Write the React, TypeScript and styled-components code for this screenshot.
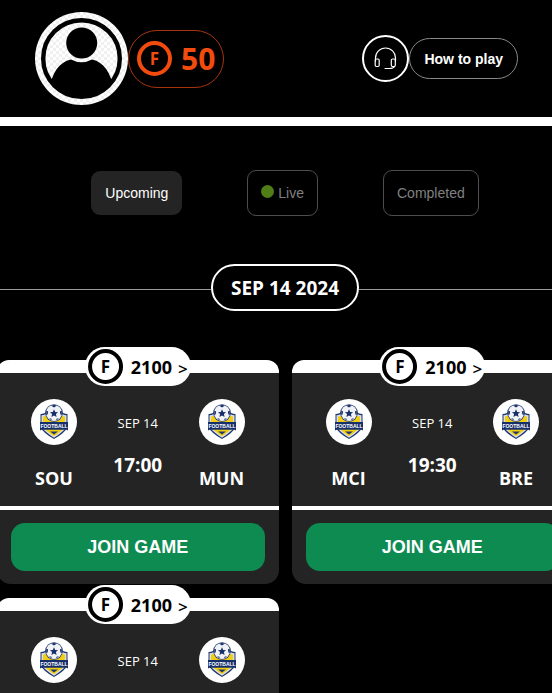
import React, { useState } from "react";
import styled, { createGlobalStyle } from "styled-components";

const GlobalStyle = createGlobalStyle`
  *, *::before, *::after { box-sizing: border-box; }
  body {
    margin: 0;
    background: #000;
    color: #fff;
    font-family: "Open Sans", "Noto Sans", sans-serif;
    overflow-x: hidden;
  }
  button { font-family: "Liberation Sans", Arial, sans-serif; cursor: pointer; }
`;

const Page = styled.div`
  overflow: hidden;
`;

const Header = styled.header`
  display: flex;
  align-items: center;
  justify-content: space-between;
  padding: 12px 34px 12px 35px;
  border-bottom: 9px solid #fff;
`;

const Group = styled.div`
  display: flex;
  align-items: center;
`;

const AvatarButton = styled.button`
  display: block;
  width: 93px;
  height: 93px;
  padding: 0;
  border: 0;
  border-radius: 50%;
  background: none;
  svg { display: block; }
`;

const Balance = styled.div`
  display: flex;
  align-items: center;
  gap: 9px;
  height: 58px;
  padding: 0 8px;
  border: 1px solid #a5350f;
  border-radius: 29px;
  color: #f24b0f;
  font-size: 30px;
  font-weight: 700;
`;

const Coin = styled.span`
  display: flex;
  align-items: center;
  justify-content: center;
  width: 35px;
  height: 35px;
  border: 4px solid currentColor;
  border-radius: 50%;
  font-size: 17px;
  font-weight: 700;
  line-height: 20px;
`;

const SupportButton = styled.button`
  display: flex;
  align-items: center;
  justify-content: center;
  width: 47px;
  height: 47px;
  padding: 0;
  border: 2px solid #fff;
  border-radius: 50%;
  background: #000;
  color: #fff;
`;

const HelpButton = styled.button`
  height: 41px;
  padding: 0 14px;
  border: 1px solid #8a8a8a;
  border-radius: 21px;
  background: #000;
  color: #fff;
  font-size: 14px;
  font-weight: 700;
`;

const Main = styled.main`
  margin-right: -18px;
`;

const Tabs = styled.nav`
  display: flex;
  align-items: center;
  justify-content: center;
  gap: 65px;
  padding-top: 44px;
`;

const Tab = styled.button<{ $active: boolean }>`
  display: flex;
  align-items: center;
  gap: 4px;
  height: ${(p) => (p.$active ? 44 : 46)}px;
  padding: 0 ${(p) => (p.$active ? 14 : 13)}px;
  border: ${(p) => (p.$active ? "0" : "1px solid #4d4d4d")};
  border-radius: 9px;
  background: ${(p) => (p.$active ? "#242424" : "#000")};
  color: ${(p) => (p.$active ? "#fff" : "#808080")};
  font-size: 14px;
`;

const LiveDot = styled.span`
  width: 13px;
  height: 13px;
  margin-bottom: 4px;
  border-radius: 50%;
  background: #4f7d16;
`;

const DateRow = styled.div`
  display: flex;
  align-items: center;
  padding-top: 48px;
  &::before, &::after {
    content: "";
    flex: 1;
    height: 1px;
    margin-top: 4px;
    background: #999;
  }
`;

const DatePill = styled.h2`
  margin: 0;
  padding: 2px 18px 0;
  border: 2px solid #fff;
  border-radius: 24px;
  font-size: 19px;
  font-weight: 700;
  line-height: 41px;
`;

const Matches = styled.section`
  display: grid;
  grid-template-columns: 1fr 1fr;
  gap: 14px 13px;
  margin: 49px -3px 0;
`;

const Card = styled.article`
  position: relative;
  border-top: 13px solid #fff;
  border-radius: 12px 12px 14px 14px;
  background: #242424;
`;

const PrizeButton = styled.button`
  position: absolute;
  top: -26px;
  left: 50%;
  transform: translateX(-50%);
  display: flex;
  align-items: center;
  height: 39px;
  padding: 0 3px;
  border: 0;
  border-radius: 20px;
  background: #fff;
  color: #000;
  && { font-family: "Open Sans", "Noto Sans", sans-serif; }
`;

const Prize = styled.span`
  margin: 0 6px 0 8px;
  font-size: 18px;
  font-weight: 700;
`;

const Arrow = styled.span`
  padding-top: 4px;
  font-size: 17px;
  font-weight: 600;
`;

const Fixture = styled.div`
  display: flex;
  justify-content: space-between;
  height: 133px;
  padding: 26px 27px 0;
`;

const Team = styled.div`
  display: flex;
  flex-direction: column;
  align-items: center;
  gap: 21px;
  width: 60px;
  font-size: 18px;
  font-weight: 700;
  line-height: 24px;
`;

const Badge = styled.svg`
  display: block;
  width: 46px;
  height: 46px;
`;

const Kickoff = styled.div`
  display: flex;
  flex-direction: column;
  align-items: center;
  gap: 20px;
  padding-top: 14px;
`;

const Day = styled.span`
  font-size: 13px;
  line-height: 20px;
`;

const Time = styled.time`
  font-size: 19px;
  font-weight: 700;
  line-height: 24px;
`;

const Footer = styled.div`
  padding: 13px 14px;
  border-top: 4px solid #fff;
`;

const JoinButton = styled.button`
  display: block;
  width: 100%;
  height: 48px;
  border: 0;
  border-radius: 14px;
  background: #0d8b51;
  color: #fff;
  font-size: 18px;
  font-weight: 700;
`;

function AvatarIcon() {
  return (
    <svg width="93" height="93" viewBox="0 0 93 93" aria-hidden="true">
      <defs>
        <pattern id="checks" width="6" height="6" patternUnits="userSpaceOnUse">
          <rect width="6" height="6" fill="#fff" />
          <path d="M0 0h3v3H0zM3 3h3v3H3z" fill="#f0f0f0" />
        </pattern>
        <clipPath id="face"><circle cx="46.5" cy="46.5" r="38" /></clipPath>
      </defs>
      <circle cx="46.5" cy="46.5" r="46.5" fill="url(#checks)" />
      <circle cx="46.5" cy="46.5" r="38.3" fill="none" stroke="#000" strokeWidth="4.4" />
      <g clipPath="url(#face)">
        <path d="M14 78C17 61 24 50 36 47.5Q46.5 53 57 47.5C69 50 76 61 79 78L79 93H14Z" fill="#000" />
      </g>
      <circle cx="46.7" cy="31" r="15.5" fill="#000" />
    </svg>
  );
}

function HeadsetIcon() {
  return (
    <svg width="23" height="23" viewBox="0 0 23 23" fill="none" stroke="currentColor" strokeWidth="1.2" strokeLinecap="round" aria-hidden="true">
      <path d="M1.5 14V11a10 10 0 0 1 20 0v3" />
      <rect x="1.2" y="12" width="4" height="7.5" rx="1.2" />
      <rect x="17.3" y="12" width="4" height="7.5" rx="1.2" />
      <path d="M20.5 19.5Q19.5 21.5 15 21.5H11" />
    </svg>
  );
}

function TeamBadge() {
  return (
    <Badge viewBox="0 0 46 46" aria-hidden="true">
      <circle cx="23" cy="23" r="23" fill="#fff" />
      <path d="M9.5 15Q14 15 16 12H30Q32 15 36.5 15V28Q34 34 23 40Q12 34 9.5 28Z" fill="#21386f" />
      <path d="M10.5 16.2Q15 16 17 13H29Q31 16 35.5 16.2V28Q32 33 23 38.8Q14 33 10.5 28Z" fill="#d9e0ec" />
      <path d="M12 17.5Q16 17 18 15H28Q30 17 34 17.5V28Q31 32 23 37.2Q15 32 12 28Z" fill="#f2ce13" />
      <circle cx="23" cy="14" r="8.8" fill="#21386f" />
      <circle cx="23" cy="14" r="8" fill="#f1f2f6" />
      <path d="M23 10.2l1.2 2.7 2.9.3-2.2 1.9.7 2.9-2.6-1.5-2.6 1.5.7-2.9-2.2-1.9 2.9-.3z" fill="#17306b" />
      <path d="M20 6.6Q23 5.6 26 6.6L23 8.5zM15.2 11.5l1.9 1-.5 3-1.4.6zM30.8 11.5l-1.9 1 .5 3 1.4.6zM18 19.5l2.2.1.8 2zM28 19.5l-2.2.1-.8 2z" fill="#17306b" />
      <path d="M19 32.5h8L23 35.5z" fill="#21386f" />
      <path d="M9 23H37V31.5L35.5 30.8H10.5L9 31.5Z" fill="#17306b" />
      <text x="23" y="29" textAnchor="middle" fill="#fff" fontFamily="Liberation Sans" fontSize="5" fontWeight="700">FOOTBALL</text>
    </Badge>
  );
}

interface Match {
  home: string;
  away: string;
  time: string;
}

const matches: Match[] = [
  { home: "SOU", away: "MUN", time: "17:00" },
  { home: "MCI", away: "BRE", time: "19:30" },
  { home: "CRY", away: "LEI", time: "19:30" },
];

function MatchCard({ home, away, time }: Match) {
  return (
    <Card>
      <PrizeButton>
        <Coin>F</Coin>
        <Prize>2100</Prize>
        <Arrow>&gt;</Arrow>
      </PrizeButton>
      <Fixture>
        <Team><TeamBadge />{home}</Team>
        <Kickoff>
          <Day>SEP 14</Day>
          <Time>{time}</Time>
        </Kickoff>
        <Team><TeamBadge />{away}</Team>
      </Fixture>
      <Footer><JoinButton>JOIN GAME</JoinButton></Footer>
    </Card>
  );
}

const tabs = ["Upcoming", "Live", "Completed"];

export default function App() {
  const [active, setActive] = useState("Upcoming");
  return (
    <Page>
      <GlobalStyle />
      <Header>
        <Group>
          <AvatarButton aria-label="Profile"><AvatarIcon /></AvatarButton>
          <Balance><Coin>F</Coin>50</Balance>
        </Group>
        <Group>
          <SupportButton aria-label="Support"><HeadsetIcon /></SupportButton>
          <HelpButton>How to play</HelpButton>
        </Group>
      </Header>
      <Main>
        <Tabs>
          {tabs.map((tab) => (
            <Tab key={tab} $active={tab === active} onClick={() => setActive(tab)}>
              {tab === "Live" && <LiveDot />}
              {tab}
            </Tab>
          ))}
        </Tabs>
        <DateRow><DatePill>SEP 14 2024</DatePill></DateRow>
        <Matches>
          {matches.map((match) => <MatchCard key={match.home} {...match} />)}
        </Matches>
      </Main>
    </Page>
  );
}
